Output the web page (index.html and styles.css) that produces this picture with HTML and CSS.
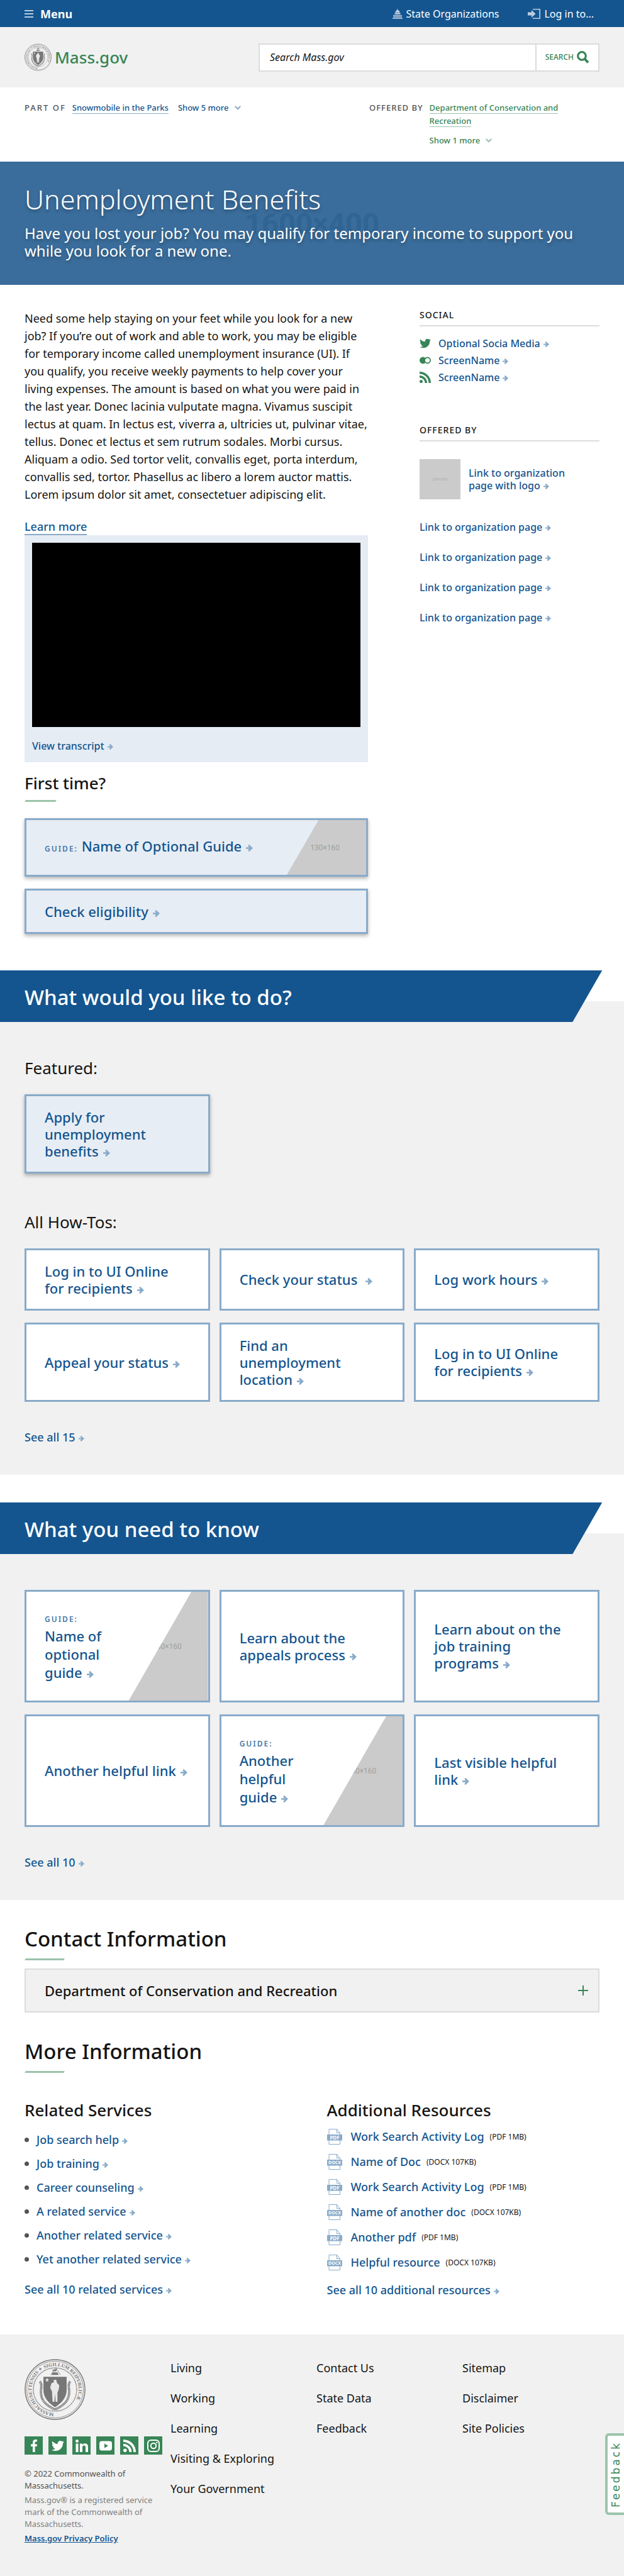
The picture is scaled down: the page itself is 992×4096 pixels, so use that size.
FILE: index.html
```html
<!DOCTYPE html>
<html lang="en">
<head>
<meta charset="utf-8">
<meta name="viewport" content="width=device-width, initial-scale=1">
<title>Unemployment Benefits | Mass.gov</title>
<link rel="stylesheet" href="styles.css">
</head>
<body>
<svg class="sprite" aria-hidden="true">
  <symbol id="arrow" viewBox="0 0 12 12"><path d="M0 4.6h5.2L3.6 1 5.6 0 12 6 5.6 12 3.6 11 5.2 7.4H0z"/></symbol>
  <symbol id="chevron" viewBox="0 0 12 8"><path d="M0 1.5 1.8 0 6 4.2 10.200 0 12 1.500 6 8z"/></symbol>
  <symbol id="twitter" viewBox="0 0 20 16"><path d="M20 1.900a8 8 0 0 1-2.400.700A4.100 4.100 0 0 0 19.400.3a8 8 0 0 1-2.600 1A4.100 4.100 0 0 0 9.800 5 11.700 11.700 0 0 1 1.400.7a4.100 4.100 0 0 0 1.300 5.500A4 4 0 0 1 .8 5.700c0 2 1.400 3.700 3.300 4.100a4 4 0 0 1-1.800.1 4.100 4.100 0 0 0 3.800 2.800A8.200 8.200 0 0 1 0 14.400 11.600 11.600 0 0 0 6.300 16c7.700 0 12-6.500 11.700-12a8 8 0 0 0 2-2.100z"/></symbol>
  <symbol id="rss" viewBox="0 0 18 18"><circle cx="2.500" cy="15.500" r="2.500"/><path d="M0 6v3.400A8.600 8.600 0 0 1 8.600 18H12A12 12 0 0 0 0 6zM0 0v3.500A14.500 14.500 0 0 1 14.500 18H18A18 18 0 0 0 0 0z"/></symbol>
  <symbol id="file" viewBox="0 0 24 25"><path fill="#fff" stroke="currentColor" d="M3 .5h12.500l5 6v18H3z"/><path fill="none" stroke="currentColor" d="M15.500.5v6h5"/><path fill="currentColor" d="M0 9h24v9.500H0z"/></symbol>
  <symbol id="seal" viewBox="0 0 100 100">
    <g fill="none" stroke="currentColor">
      <circle cx="50" cy="50" r="49" stroke-width="1.500"/>
      <circle cx="50" cy="50" r="46.500" stroke-width=".8"/>
      <circle cx="50" cy="50" r="35.500" stroke-width="1.400" stroke-dasharray="1.500 .7"/>
      <path id="ring" stroke="none" d="M50 88.500A38.500 38.500 0 1 1 50.100 88.500"/>
    </g>
    <text class="seal-text"><textPath href="#ring" startOffset="2">MASSACHUSETTENSIS ✦ SIGILLUM REIPUBLICÆ</textPath></text>
    <g fill="currentColor">
      <path d="M31 29h38v22c0 12-8 21-19 28-11-7-19-16-19-28z"/>
      <path d="M44 26l2-4h8l2 4zM47 20l-2-3 4 1 4-3-1 5z"/>
    </g>
    <path fill="none" stroke="currentColor" stroke-width="4" stroke-dasharray="1.600 .7" d="M25 37c5 5 1 12 2 20 2 15 12 20 23 26 11-6 21-11 23-26 1-8-3-15 2-20"/>
    <path fill="none" stroke="currentColor" stroke-width=".8" d="M43 26l8-12 8 12"/>
    <path fill="#e8e8e8" d="M48 34h4l1 5 4 4-1 7-2 5v15h-3l-1-13-1 13h-3l-1-17-3-6 2-7 4-2zM37 31l1 2h2l-1.500 1.500.5 2.500-2-1-2 1 .5-2.500L34 33h2z"/>
  </symbol>
</svg>

<div class="topbar">
  <button class="menu" type="button"><span class="bars"></span>Menu</button>
  <nav class="utility" aria-label="Utility">
    <a href="#"><svg class="dome" viewBox="0 0 16 16" aria-hidden="true"><path d="M7.500 0h1v2A4 4 0 0 1 11.500 6h-7a4 4 0 0 1 3-4zM3.500 6.500h9v2.500h-9zM1 10h14v1.500H1zM1.500 12h2v2h-2zM4.500 12h2v2h-2zM7.200 12h1.600v2H7.200zM9.500 12h2v2h-2zM12.500 12h2v2h-2zM0 14.500h16V16H0z"/></svg>State Organizations</a>
    <a href="#"><svg class="login" viewBox="0 0 20 16" aria-hidden="true"><path d="M0 5.500h6V2l6.500 6L6 14v-3.500H0z"/><path d="M8 0h12v16H8v-1.500h10.300v-13H8z"/></svg>Log in to...</a>
  </nav>
</div>

<header class="header">
  <a class="brand" href="#"><svg class="brand-seal" aria-hidden="true"><use href="#seal"/></svg>Mass.gov</a>
  <form class="search">
    <input type="search" aria-label="Search Mass.gov" placeholder="Search Mass.gov">
    <button type="button">Search<svg viewBox="0 0 20 20" aria-hidden="true"><circle cx="8" cy="8" r="6.300" fill="none" stroke="currentColor" stroke-width="3.200"/><path d="M12.500 12.500l5.500 6" stroke="currentColor" stroke-width="4"/></svg></button>
  </form>
</header>

<section class="relations">
  <div class="relation">
    <span class="relation-label">Part of</span>
    <div class="relation-links"><span><a href="#">Snowmobile in the Parks</a></span><button type="button">Show 5 more<svg class="chev" aria-hidden="true"><use href="#chevron"/></svg></button></div>
  </div>
  <div class="relation relation-green">
    <span class="relation-label">Offered by</span>
    <div class="relation-links"><span><a href="#">Department of Conservation and Recreation</a></span><button type="button">Show 1 more<svg class="chev" aria-hidden="true"><use href="#chevron"/></svg></button></div>
  </div>
</section>

<section class="hero">
  <span class="hero-size" aria-hidden="true">1600×400</span>
  <h1>Unemployment Benefits</h1>
  <p>Have you lost your job? You may qualify for temporary income to support you while you look for a new one.</p>
</section>

<div class="overview">
  <main class="intro">
    <p>Need some help staying on your feet while you look for a new job? If you’re out of work and able to work, you may be eligible for temporary income called unemployment insurance (UI). If you qualify, you receive weekly payments to help cover your living expenses. The amount is based on what you were paid in the last year. Donec lacinia vulputate magna. Vivamus suscipit lectus at quam. In lectus est, viverra a, ultricies ut, pulvinar vitae, tellus. Donec et lectus et sem rutrum sodales. Morbi cursus. Aliquam a odio. Sed tortor velit, convallis eget, porta interdum, convallis sed, tortor. Phasellus ac libero a lorem auctor mattis. Lorem ipsum dolor sit amet, consectetuer adipiscing elit.</p>
    <a class="learn" href="#">Learn more</a>
    <div class="video">
      <div class="video-frame"></div>
      <a class="link small" href="#">View transcript<svg class="arrow" aria-hidden="true"><use href="#arrow"/></svg></a>
    </div>
    <h2 class="title-sm ruled ruled-short">First time?</h2>
    <div class="actions">
      <a class="card card-tint guide-wide" href="#"><span><b class="eyebrow">Guide:</b> Name of Optional Guide<svg class="arrow" aria-hidden="true"><use href="#arrow"/></svg></span><span class="thumb" aria-hidden="true">130×160</span></a>
      <a class="card card-tint" href="#"><span>Check eligibility<svg class="arrow" aria-hidden="true"><use href="#arrow"/></svg></span></a>
    </div>
  </main>
  <aside class="side">
    <h2>Social</h2>
    <ul class="social">
      <li><svg viewBox="0 0 20 16" aria-hidden="true"><use href="#twitter"/></svg><a class="link" href="#">Optional Socia Media<svg class="arrow" aria-hidden="true"><use href="#arrow"/></svg></a></li>
      <li><svg viewBox="0 0 20 12" aria-hidden="true"><circle cx="6" cy="6" r="6"/><circle cx="14" cy="6" r="5" fill="#fff" stroke="currentColor" stroke-width="2"/></svg><a class="link" href="#">ScreenName<svg class="arrow" aria-hidden="true"><use href="#arrow"/></svg></a></li>
      <li><svg viewBox="0 0 18 18" aria-hidden="true"><use href="#rss"/></svg><a class="link" href="#">ScreenName<svg class="arrow" aria-hidden="true"><use href="#arrow"/></svg></a></li>
    </ul>
    <h2>Offered by</h2>
    <ul class="orgs">
      <li class="org-logo"><span class="logo-box" aria-hidden="true">250×250</span><a class="link" href="#">Link to organization page with logo<svg class="arrow" aria-hidden="true"><use href="#arrow"/></svg></a></li>
      <li><a class="link" href="#">Link to organization page<svg class="arrow" aria-hidden="true"><use href="#arrow"/></svg></a></li>
      <li><a class="link" href="#">Link to organization page<svg class="arrow" aria-hidden="true"><use href="#arrow"/></svg></a></li>
      <li><a class="link" href="#">Link to organization page<svg class="arrow" aria-hidden="true"><use href="#arrow"/></svg></a></li>
      <li><a class="link" href="#">Link to organization page<svg class="arrow" aria-hidden="true"><use href="#arrow"/></svg></a></li>
    </ul>
  </aside>
</div>

<section class="band">
  <h2 class="banner">What would you like to do?</h2>
  <div class="band-body">
    <h3>Featured:</h3>
    <div class="cards">
      <a class="card card-tint" href="#"><span>Apply for unemployment benefits<svg class="arrow" aria-hidden="true"><use href="#arrow"/></svg></span></a>
    </div>
    <h3 class="next">All How-Tos:</h3>
    <div class="cards">
      <a class="card" href="#"><span>Log in to UI Online for recipients<svg class="arrow" aria-hidden="true"><use href="#arrow"/></svg></span></a>
      <a class="card" href="#"><span>Check your status&nbsp;<svg class="arrow" aria-hidden="true"><use href="#arrow"/></svg></span></a>
      <a class="card" href="#"><span>Log work hours<svg class="arrow" aria-hidden="true"><use href="#arrow"/></svg></span></a>
      <a class="card" href="#"><span>Appeal your status<svg class="arrow" aria-hidden="true"><use href="#arrow"/></svg></span></a>
      <a class="card" href="#"><span>Find an unemployment location<svg class="arrow" aria-hidden="true"><use href="#arrow"/></svg></span></a>
      <a class="card" href="#"><span>Log in to UI Online for recipients<svg class="arrow" aria-hidden="true"><use href="#arrow"/></svg></span></a>
    </div>
    <a class="link see-all" href="#">See all 15<svg class="arrow" aria-hidden="true"><use href="#arrow"/></svg></a>
  </div>
</section>

<section class="band band-second">
  <h2 class="banner">What you need to know</h2>
  <div class="band-body">
    <div class="cards cards-tall">
      <a class="card guide-tall" href="#"><span><b class="eyebrow">Guide:</b> Name of optional guide<svg class="arrow" aria-hidden="true"><use href="#arrow"/></svg></span><span class="thumb" aria-hidden="true">130×160</span></a>
      <a class="card" href="#"><span>Learn about the appeals process<svg class="arrow" aria-hidden="true"><use href="#arrow"/></svg></span></a>
      <a class="card" href="#"><span>Learn about on the job training programs<svg class="arrow" aria-hidden="true"><use href="#arrow"/></svg></span></a>
      <a class="card" href="#"><span>Another helpful link<svg class="arrow" aria-hidden="true"><use href="#arrow"/></svg></span></a>
      <a class="card guide-tall" href="#"><span><b class="eyebrow">Guide:</b> Another helpful guide<svg class="arrow" aria-hidden="true"><use href="#arrow"/></svg></span><span class="thumb" aria-hidden="true">130×160</span></a>
      <a class="card" href="#"><span>Last visible helpful link<svg class="arrow" aria-hidden="true"><use href="#arrow"/></svg></span></a>
    </div>
    <a class="link see-all" href="#">See all 10<svg class="arrow" aria-hidden="true"><use href="#arrow"/></svg></a>
  </div>
</section>

<section class="info">
  <h2 class="title-lg ruled">Contact Information</h2>
  <button class="accordion" type="button" aria-expanded="false">Department of Conservation and Recreation<svg viewBox="0 0 16 16" aria-hidden="true"><path d="M7 0h2v7h7v2H9v7H7V9H0V7h7z"/></svg></button>
</section>

<section class="info info-more">
  <h2 class="title-lg ruled">More Information</h2>
  <div class="lists">
    <div>
      <h3 class="title-sm">Related Services</h3>
      <ul class="services">
        <li><a class="link" href="#">Job search help<svg class="arrow" aria-hidden="true"><use href="#arrow"/></svg></a></li>
        <li><a class="link" href="#">Job training<svg class="arrow" aria-hidden="true"><use href="#arrow"/></svg></a></li>
        <li><a class="link" href="#">Career counseling<svg class="arrow" aria-hidden="true"><use href="#arrow"/></svg></a></li>
        <li><a class="link" href="#">A related service<svg class="arrow" aria-hidden="true"><use href="#arrow"/></svg></a></li>
        <li><a class="link" href="#">Another related service<svg class="arrow" aria-hidden="true"><use href="#arrow"/></svg></a></li>
        <li><a class="link" href="#">Yet another related service<svg class="arrow" aria-hidden="true"><use href="#arrow"/></svg></a></li>
      </ul>
      <a class="link more" href="#">See all 10 related services<svg class="arrow" aria-hidden="true"><use href="#arrow"/></svg></a>
    </div>
    <div>
      <h3 class="title-sm">Additional Resources</h3>
      <ul class="files">
        <li><svg viewBox="0 0 24 25" aria-hidden="true"><use href="#file"/><text x="12" y="17">PDF</text></svg><a class="link" href="#">Work Search Activity Log</a><small>(PDF 1MB)</small></li>
        <li><svg viewBox="0 0 24 25" aria-hidden="true"><use href="#file"/><text class="docx" x="12" y="16">DOCX</text></svg><a class="link" href="#">Name of Doc</a><small>(DOCX 107KB)</small></li>
        <li><svg viewBox="0 0 24 25" aria-hidden="true"><use href="#file"/><text x="12" y="17">PDF</text></svg><a class="link" href="#">Work Search Activity Log</a><small>(PDF 1MB)</small></li>
        <li><svg viewBox="0 0 24 25" aria-hidden="true"><use href="#file"/><text class="docx" x="12" y="16">DOCX</text></svg><a class="link" href="#">Name of another doc</a><small>(DOCX 107KB)</small></li>
        <li><svg viewBox="0 0 24 25" aria-hidden="true"><use href="#file"/><text x="12" y="17">PDF</text></svg><a class="link" href="#">Another pdf</a><small>(PDF 1MB)</small></li>
        <li><svg viewBox="0 0 24 25" aria-hidden="true"><use href="#file"/><text class="docx" x="12" y="16">DOCX</text></svg><a class="link" href="#">Helpful resource</a><small>(DOCX 107KB)</small></li>
      </ul>
      <a class="link more" href="#">See all 10 additional resources<svg class="arrow" aria-hidden="true"><use href="#arrow"/></svg></a>
    </div>
  </div>
</section>

<footer class="footer">
  <div class="footer-info">
    <svg class="footer-seal" role="img" aria-label="Seal of Massachusetts"><use href="#seal"/></svg>
    <div class="footer-social">
      <a href="#" aria-label="Facebook"><svg viewBox="0 0 20 20"><path d="M8 20v-9H5V7.500h3V5c0-3.200 1.800-5 4.600-5 1 0 2.400.2 2.400.2v3h-1.600c-1.400 0-1.800.9-1.800 1.800v2.500H15L14.500 11h-2.900v9z"/></svg></a>
      <a href="#" aria-label="Twitter"><svg viewBox="0 0 20 16"><use href="#twitter"/></svg></a>
      <a href="#" aria-label="LinkedIn"><svg viewBox="0 0 20 20"><path d="M.5 6.500h4V20h-4zM7 6.500h4v2c.8-1.400 2.200-2.300 4-2.300 4 0 5 2.600 5 6V20h-4v-7c0-1.800-.3-3.500-2.300-3.500-2 0-2.700 1.500-2.700 3.500v7H7z"/><circle cx="2.500" cy="2.500" r="2.400"/></svg></a>
      <a href="#" aria-label="YouTube"><svg viewBox="0 0 20 20"><path fill-rule="evenodd" d="M4 2.500h12c3 0 4 1.500 4 4v7c0 2.500-1 4-4 4H4c-3 0-4-1.500-4-4v-7c0-2.500 1-4 4-4zM8 6.500v7l6-3.500z"/></svg></a>
      <a href="#" aria-label="RSS"><svg viewBox="0 0 18 18"><use href="#rss"/></svg></a>
      <a href="#" aria-label="Instagram"><svg viewBox="0 0 20 20"><rect x="1" y="1" width="18" height="18" rx="5" fill="none" stroke="currentColor" stroke-width="2"/><circle cx="10" cy="10" r="4.200" fill="none" stroke="currentColor" stroke-width="2"/><circle cx="15.300" cy="4.700" r="1.200"/></svg></a>
    </div>
    <p class="copyright">© 2022 Commonwealth of Massachusetts.</p>
    <p>Mass.gov® is a registered service mark of the Commonwealth of Massachusetts.</p>
    <a class="privacy" href="#">Mass.gov Privacy Policy</a>
  </div>
  <nav class="footer-nav" aria-label="Footer">
    <ul><li><a href="#">Living</a></li><li><a href="#">Working</a></li><li><a href="#">Learning</a></li><li><a href="#">Visiting &amp; Exploring</a></li><li><a href="#">Your Government</a></li></ul>
    <ul><li><a href="#">Contact Us</a></li><li><a href="#">State Data</a></li><li><a href="#">Feedback</a></li></ul>
    <ul><li><a href="#">Sitemap</a></li><li><a href="#">Disclaimer</a></li><li><a href="#">Site Policies</a></li></ul>
  </nav>
  <button class="feedback" type="button">Feedback</button>
</footer>
</body>
</html>
```
FILE: styles.css
```css
:root {
  --blue: #14558f;
  --blue-mid: #89abc9;
  --green: #388557;
  --green-soft: #9bc4ab;
  --grey: #f1f1f1;
  --line: #dcdcdc;
  --ink: #141414;
  --gutter: 39px;
}
* { box-sizing: border-box; }
body {
  display: flex;
  flex-direction: column;
  min-height: 100vh;
  margin: 0;
  background: #fff;
  color: var(--ink);
  font: 400 18px/28px "Noto Sans", sans-serif;
}
h1, h2, h3, p, ul { margin: 0; padding: 0; font-weight: 400; }
ul { list-style: none; }
a { color: var(--blue); text-decoration: none; }
button { margin: 0; padding: 0; border: 0; background: none; font: inherit; color: inherit; cursor: pointer; }
svg { fill: currentColor; flex: none; }
.sprite { display: none; }

/* Top bar */
.topbar {
  display: flex;
  align-items: center;
  justify-content: space-between;
  height: 43px;
  padding: 0 48px 0 var(--gutter);
  background: var(--blue);
  color: #fff;
}
.menu { display: flex; align-items: center; gap: 11px; font-size: 18px; font-weight: 700; line-height: 42px; }
.bars { width: 14px; height: 12px; background: repeating-linear-gradient(#b9cce0 0 2px, transparent 2px 5px); }
.utility { display: flex; gap: 46px; font-size: 16px; }
.utility a { display: flex; align-items: center; gap: 6px; color: #fff; }
.utility svg { height: 16px; color: #b9cce0; }
.dome { width: 16px; }
.login { width: 20px; }

/* Header */
.header {
  display: flex;
  align-items: center;
  justify-content: space-between;
  height: 96px;
  padding: 0 var(--gutter);
  background: var(--grey);
}
.brand { display: flex; align-items: center; gap: 5px; color: var(--green); font-size: 26px; font-weight: 500; line-height: 44px; }
.brand-seal { width: 43px; height: 44px; color: #777; }
.seal-text { font: 600 8px "Liberation Serif", serif; fill: currentColor; }
.search { display: flex; width: 59.300%; height: 45px; border: 2px solid var(--line); background: #fff; }
.search input {
  flex: 1;
  min-width: 0;
  padding: 0 16px;
  border: 0;
  background: none;
  font: italic 400 16px "Noto Sans", sans-serif;
}
.search input::placeholder { color: var(--ink); opacity: 1; }
.search button {
  display: flex;
  align-items: center;
  gap: 5px;
  padding: 0 14px;
  border-left: 2px solid var(--line);
  color: var(--green);
  font-size: 12px;
  font-weight: 500;
  text-transform: uppercase;
}
.search svg { width: 20px; height: 20px; }

/* Part of / offered by */
.relations { display: flex; justify-content: space-between; min-height: 118px; padding: 22px var(--gutter) 0; font-size: 13px; font-weight: 500; line-height: 21px; }
.relation { display: flex; gap: 10px; color: var(--blue); }
.relation-green { width: 366px; color: var(--green); }
.relation-label { flex: none; color: #535353; letter-spacing: 2px; text-transform: uppercase; }
.relation-green .relation-label { letter-spacing: 1px; }
.relation-links { display: flex; align-items: flex-start; gap: 15px; white-space: nowrap; }
.relation-links a { color: inherit; border-bottom: 1px solid var(--blue-mid); }
.relation-green .relation-links { flex-direction: column; gap: 10px; width: 220px; white-space: normal; }
.relation-green a { border-color: var(--green-soft); }
.relation-links button { display: flex; align-items: center; gap: 9px; }
.chev { width: 10px; height: 7px; opacity: .5; }

/* Hero */
.hero { position: relative; padding: 36px var(--gutter) 40px; background: #3a6d9c; color: #fff; }
.hero h1 { position: relative; font-size: 43px; font-weight: 300; line-height: 48px; text-shadow: 0 3px 5px rgba(20, 20, 20, .35); }
.hero p { position: relative; margin-top: 16px; font-size: 24px; line-height: 28px; text-shadow: 0 3px 5px rgba(20, 20, 20, .35); }
.hero-size {
  position: absolute;
  inset: 0;
  display: flex;
  align-items: center;
  justify-content: center;
  color: #2f6493;
  font: 700 47px "Liberation Sans Narrow", "Roboto", sans-serif;
}

/* Overview */
.overview { display: grid; grid-template-columns: minmax(0, 546fr) minmax(0, 286fr); gap: 82px; padding: 39px var(--gutter) 58px; }
.intro p { margin-right: -4px; }
.link { font-weight: 500; }
.arrow { width: 9px; height: 9px; margin: 0 -14px 0 5px; color: var(--blue-mid); }
.learn { display: inline-block; height: 28px; margin-top: 23px; border-bottom: 2px solid var(--blue-mid); font-weight: 500; vertical-align: top; }
.video { padding: 12px 12px 14px; background: #e5ecf4; }
.video-frame { height: 293px; background: #000; }
.video .link { display: block; margin-top: 18px; font-size: 16px; line-height: 24px; }
.title-sm { font-size: 26px; font-weight: 500; line-height: 34px; }
.title-lg { font-size: 33px; font-weight: 500; line-height: 42px; }
.ruled::after { content: ""; display: block; width: 62px; height: 3px; margin: 10px 0 0 1px; background: var(--green-soft); transform: skewX(-30deg); }
.ruled-short { margin-top: 16px; }
.ruled-short::after { width: 49px; }
.actions { display: grid; grid-template-rows: 93px 72px; gap: 19px; margin-top: 26px; }

/* Cards */
.card {
  position: relative;
  display: flex;
  align-items: center;
  padding: 19px 44px 19px 29px;
  border: 3px solid var(--blue-mid);
  background: #fff;
  color: var(--blue);
  font-size: 22px;
  font-weight: 500;
  line-height: 27px;
}
.card-tint { background: #e7edf5; box-shadow: 0 3px 6px rgba(0, 0, 0, .3); }
.card .arrow { width: 11px; height: 11px; margin: 0 -18px 0 7px; }
.eyebrow { color: #4377a5; font-size: 12px; font-weight: 600; letter-spacing: 2px; text-transform: uppercase; }
.thumb {
  position: absolute;
  inset: 0 0 0 auto;
  width: 126px;
  padding-right: 42px;
  display: flex;
  align-items: center;
  justify-content: flex-end;
  background: #cbcbcb;
  color: #a0a0a0;
  font: 400 12px "Liberation Sans Narrow", "Roboto", sans-serif;
}
.guide-wide .thumb { clip-path: polygon(40% 0, 100% 0, 100% 100%, 0 100%); }
.guide-tall { padding-right: 146px; line-height: 29px; }
.guide-tall .eyebrow { display: block; line-height: 25px; }
.guide-tall .thumb { clip-path: polygon(79% 0, 100% 0, 100% 100%, 0 100%); }

/* Sidebar */
.side { font-size: 16px; line-height: 20px; }
.side h2 { padding-bottom: 7px; border-bottom: 2px solid var(--line); font-size: 14px; font-weight: 500; letter-spacing: 1px; line-height: 18px; text-transform: uppercase; }
.social { display: grid; gap: 7px; margin: 17px 0 65px; }
.social li { display: flex; align-items: center; gap: 12px; height: 20px; }
.social li > svg { width: 18px; height: 18px; color: var(--green); }
.orgs { display: grid; gap: 28px; margin-top: 28px; }
.org-logo { display: flex; align-items: center; gap: 13px; margin-bottom: 6px; }
.org-logo .link { max-width: 170px; }
.logo-box { display: grid; place-items: center; width: 65px; height: 64px; background: #cbcbcb; color: #aaa; font-size: 6px; }

/* Grey bands */
.band { background: linear-gradient(#fff 49px, var(--grey) 49px); }
.band-second { margin-top: 44px; }
.banner {
  width: 96.500%;
  height: 82px;
  padding: 22px var(--gutter) 0;
  background: var(--blue);
  clip-path: polygon(0 0, 100% 0, calc(100% - 47px) 100%, 0 100%);
  color: #fff;
  font-size: 33px;
  font-weight: 500;
  line-height: 42px;
}
.band-body { padding: 55px var(--gutter) 48px; }
.band-second .band-body { padding-top: 57px; }
.band h3 { margin-bottom: 24px; font-size: 26px; line-height: 36px; }
.band .next { margin-top: 59px; }
.cards { display: grid; grid-template-columns: repeat(3, minmax(0, 1fr)); gap: 19px 15px; }
.cards .card { min-height: 99px; }
.cards .card:nth-child(n+4), .cards .card-tint { min-height: 126px; }
.cards-tall .card:nth-child(n) { min-height: 179px; }
.see-all { display: block; margin-top: 44px; line-height: 24px; }

/* Information */
.info { padding: 41px var(--gutter) 0; }
.accordion {
  display: flex;
  align-items: center;
  justify-content: space-between;
  width: 100%;
  height: 70px;
  margin-top: 13px;
  padding: 0 16px 0 30px;
  border: 2px solid var(--line);
  background: var(--grey);
  font-size: 22px;
  font-weight: 500;
}
.accordion svg { width: 16px; height: 16px; color: var(--green); }
.info-more { padding-bottom: 59px; }
.lists { display: grid; grid-template-columns: repeat(2, minmax(0, 1fr)); gap: 47px; margin-top: 42px; line-height: 24px; }
.services { display: grid; gap: 14px; margin: 18px 0 24px; }
.services li { display: flex; align-items: center; gap: 12px; height: 24px; }
.services li::before { content: ""; width: 7px; height: 7px; border-radius: 50%; background: #535353; }
.files { display: grid; gap: 14px; margin: 12px 0 19px; line-height: 26px; }
.files li { display: flex; align-items: center; height: 26px; }
.files li > svg { width: 24px; height: 25px; margin-right: 14px; color: var(--blue-mid); }
.files text { fill: #fff; font: 700 8px "Noto Sans", sans-serif; text-anchor: middle; }
.files .docx { font-size: 7px; }
.files small { margin-left: 9px; padding-top: 2px; font-size: 12px; line-height: 24px; }
.more { display: block; }

/* Footer */
.footer { position: relative; flex: 1; display: grid; grid-template-columns: 220px minmax(0, 1fr); gap: 12px; padding: 39px 24px 40px var(--gutter); background: var(--grey); }
.footer-info { color: #808080; font-size: 13px; line-height: 19px; }
.footer-seal { display: block; width: 97px; height: 97px; color: #777; }
.footer-social { display: flex; gap: 9px; margin: 26px 0 21px; }
.footer-social a { display: grid; place-items: center; width: 29px; height: 29px; background: var(--green); color: #fff; }
.footer-social svg { width: 20px; height: 20px; }
.footer-info .copyright { margin-bottom: 4px; color: #535353; }
.privacy { display: block; margin-top: 4px; font-weight: 600; text-decoration: underline; }
.footer-nav { display: grid; grid-template-columns: repeat(3, minmax(0, 232px)); }
.footer-nav ul { display: grid; align-content: start; gap: 20px; }
.footer-nav a { color: var(--ink); }
.feedback {
  position: absolute;
  top: 157px;
  right: 0;
  width: 30px;
  height: 130px;
  border: 4px solid var(--green-soft);
  border-right: 0;
  border-radius: 6px 0 0 6px;
  background: #fff;
  color: var(--green);
  font: 500 17px "DejaVu Sans", sans-serif;
  letter-spacing: 3px;
  writing-mode: sideways-lr;
}
```
